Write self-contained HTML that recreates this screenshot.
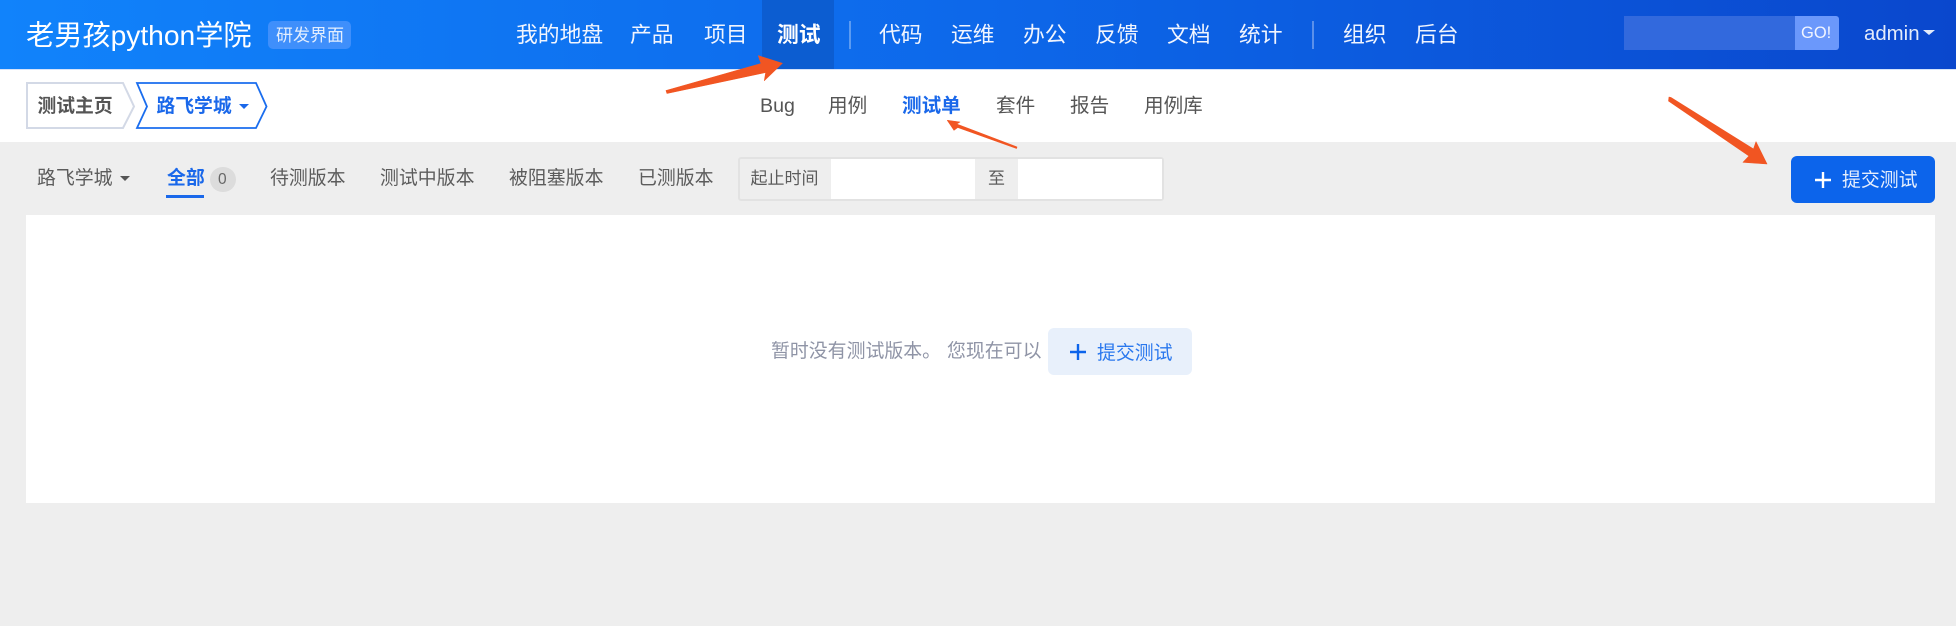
<!DOCTYPE html>
<html lang="zh"><head><meta charset="utf-8"><title>测试单</title>
<style>
html,body{margin:0;padding:0;width:1956px;height:626px;overflow:hidden;background:#eee}
body{position:relative;font-family:"Liberation Sans","Noto Sans CJK SC",sans-serif;color:#555}
.a{position:absolute}
.t{position:absolute;white-space:nowrap;line-height:1;filter:blur(.3px)}
.n{color:#f1f5fe;font-size:21.8px;top:24px}
.s{font-size:19.6px;top:97px;color:#555}
.b{font-size:18.9px;top:170px;color:#5c5c5c}
.w{position:absolute;width:0;height:0;border-style:solid;border-color:transparent}
</style></head><body>
<div class="a" style="left:0;top:0;width:1956px;height:70px;background:linear-gradient(90deg,#1183fb 0%,#0d68ea 50%,#0a47cd 100%);border-bottom:1px solid #d5e3fa;box-sizing:border-box"></div>
<div class="a" style="left:0;top:70px;width:1956px;height:72px;background:#fff"></div>
<div class="t" style="left:26px;top:21px;font-size:28.2px;color:#fff">老男孩python学院</div>
<div class="a" style="left:268px;top:21px;width:83px;height:28px;border-radius:5px;background:#3f8ffb"></div>
<div class="t" style="left:276px;top:27px;font-size:17px;color:#e3eefe">研发界面</div>
<div class="t n" style="left:516px">我的地盘</div>
<div class="t n" style="left:630px">产品</div>
<div class="t n" style="left:704px">项目</div>
<div class="a" style="left:762px;top:0;width:72px;height:69px;background:#0c5dd1"></div>
<div class="t n" style="left:777px;font-weight:bold;color:#fff">测试</div>
<div class="a" style="left:849px;top:21px;width:2px;height:28px;background:#5b9bf2"></div>
<div class="t n" style="left:879px">代码</div>
<div class="t n" style="left:951px">运维</div>
<div class="t n" style="left:1023px">办公</div>
<div class="t n" style="left:1095px">反馈</div>
<div class="t n" style="left:1167px">文档</div>
<div class="t n" style="left:1239px">统计</div>
<div class="a" style="left:1312px;top:21px;width:2px;height:28px;background:#5b90ea"></div>
<div class="t n" style="left:1343px">组织</div>
<div class="t n" style="left:1415px">后台</div>
<div class="a" style="left:1624px;top:16px;width:171px;height:34px;background:#3269dd"></div>
<div class="a" style="left:1795px;top:16px;width:44px;height:34px;background:#6b98fb;border-radius:0 3px 3px 0"></div>
<div class="t" style="left:1801px;top:25px;font-size:16.5px;color:#f1f5ff">GO!</div>
<div class="t" style="left:1864px;top:24px;font-size:20.4px;color:#e3ebfb">admin</div>
<div class="w" style="left:1923px;top:30px;border-width:5.5px 6px 0;border-top-color:#e3ebfb"></div>

<svg class="a" style="left:0;top:70px" width="300" height="72">
<path d="M27 13H123L134 36.500L123 58H27Z" fill="#fff" stroke="#d3d9e6" stroke-width="2"/>
<path d="M137 13H256L266.500 36.500L256 58H137L147 36.500Z" fill="#fff" stroke="#1a6dee" stroke-width="1.800"/>
</svg>
<div class="t" style="left:37.500px;top:97px;font-size:18.800px;font-weight:bold;color:#555">测试主页</div>
<div class="t" style="left:156.500px;top:97px;font-size:18.800px;font-weight:bold;color:#1a68ea">路飞学城</div>
<div class="w" style="left:238.500px;top:104px;border-width:5.500px 5.500px 0;border-top-color:#1a68ea"></div>

<div class="t s" style="left:760px">Bug</div>
<div class="t s" style="left:828px">用例</div>
<div class="t s" style="left:902px;font-weight:bold;color:#1a68ea">测试单</div>
<div class="t s" style="left:996px">套件</div>
<div class="t s" style="left:1070px">报告</div>
<div class="t s" style="left:1144px">用例库</div>

<div class="t b" style="left:37px">路飞学城</div>
<div class="w" style="left:119.500px;top:176px;border-width:5.500px 5.500px 0;border-top-color:#555"></div>
<div class="t b" style="left:167px;font-weight:bold;color:#1a68ea">全部</div>
<div class="a" style="left:166px;top:195px;width:38px;height:3px;background:#1a68ea"></div>
<div class="a" style="left:210px;top:167px;width:26px;height:25px;border-radius:13px;background:#dcdcdc"></div>
<div class="t" style="left:218px;top:172px;font-size:15.500px;color:#666">0</div>
<div class="t b" style="left:270px">待测版本</div>
<div class="t b" style="left:380px">测试中版本</div>
<div class="t b" style="left:509px">被阻塞版本</div>
<div class="t b" style="left:638px">已测版本</div>

<div class="a" style="left:738px;top:157px;width:426px;height:44px;box-sizing:border-box;border:2px solid #e2e2e2;border-radius:3px;background:#eee"></div>
<div class="a" style="left:831px;top:159px;width:144px;height:40px;background:#fff"></div>
<div class="a" style="left:1018px;top:159px;width:144px;height:40px;background:#fff"></div>
<div class="t" style="left:750.500px;top:170px;font-size:17px;color:#5c5c5c">起止时间</div>
<div class="t" style="left:988px;top:170px;font-size:17px;color:#5c5c5c">至</div>

<div class="a" style="left:1791px;top:156px;width:144px;height:47px;border-radius:6px;background:#0c64eb"></div>
<svg class="a" style="left:1814px;top:171px" width="18" height="18"><path d="M9 1V17M1 9H17" stroke="#fff" stroke-width="2.400"/></svg>
<div class="t" style="left:1842px;top:171.500px;font-size:18.900px;color:#e6effd">提交测试</div>

<div class="a" style="left:26px;top:215px;width:1909px;height:288px;background:#fff"></div>
<div class="t" style="left:771px;top:342.500px;font-size:18.900px;color:#8f94a6">暂时没有测试版本。</div>
<div class="t" style="left:947px;top:342.500px;font-size:18.900px;color:#8f94a6">您现在可以</div>
<div class="a" style="left:1048px;top:328px;width:144px;height:47px;border-radius:6px;background:#e8f0fb"></div>
<svg class="a" style="left:1069px;top:343px" width="18" height="18"><path d="M9 1V17M1 9H17" stroke="#0c64eb" stroke-width="2.400"/></svg>
<div class="t" style="left:1097px;top:345px;font-size:18.900px;color:#2a78ee">提交测试</div>

<svg class="a" style="left:0;top:0" width="1956" height="626">
<path d="M666 90.500L761 63.500L758.300 55.700L782.300 63.300L764.300 80.700L765.700 72.500L667 93.500Z" fill="#f15522" stroke="#f15522" stroke-width=".6" stroke-linejoin="round"/>
<path d="M1017 147L956.700 124L960 122L947.300 120.300L954 130.300L957.700 127.500L1016.500 148.500Z" fill="#f15522" stroke="#f15522" stroke-width=".6" stroke-linejoin="round"/>
<path d="M1669 97L1671 97.500L1753.500 149L1756 141.700L1767 164L1743 162.300L1749 156L1668.500 101Z" fill="#f15522" stroke="#f15522" stroke-width=".6" stroke-linejoin="round"/>
</svg>
</body></html>
